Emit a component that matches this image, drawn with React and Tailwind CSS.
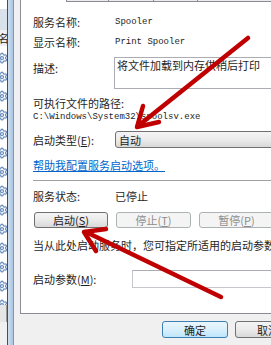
import { Settings } from 'lucide-react';

const gears = Array.from({ length: 14 });

function Btn({ children, disabled, main, className = '' }) {
  let look = 'border-[#707070] bg-gradient-to-b from-[#f4f4f4] via-[#ebebeb] to-[#d9d9d9] text-[#1e1e1e]';
  if (disabled) look = 'border-[#adb2b5] bg-[#f4f4f4] text-[#8d8d8d]';
  if (main) look = 'border-[#3c7fb1] bg-gradient-to-b from-[#eaf6fd] via-[#d9f0fc] to-[#bee6fd] text-[#1e1e1e]';
  return (
    <div className={`shrink-0 border rounded-[3px] flex items-center justify-center text-[11px] leading-[12px] ${look} ${className}`}>
      {children}
    </div>
  );
}

export default function App() {
  return (
    <div className="relative w-[271px] h-[345px] overflow-hidden flex bg-[#f0f0f0] font-['Noto_Sans_CJK_SC','Liberation_Sans',sans-serif] text-[#1e1e1e]">
      {/* service list behind the dialog */}
      <div className="w-[7px] shrink-0 flex flex-col overflow-hidden bg-white">
        <div className="h-[9px] shrink-0 bg-white" />
        <div className="h-[21px] shrink-0 bg-[#d9e1ea]" />
        <div className="h-[16px] shrink-0 bg-[#eceef1] flex items-center text-[11px] leading-[12px] whitespace-nowrap">
          <span className="-ml-[2px]">名称</span>
        </div>
        <div className="h-[259px] shrink-0 flex flex-col gap-[7px] pt-[6px] overflow-hidden">
          {gears.map((_, i) => (
            <Settings key={i} size={12} strokeWidth={2.5} className="shrink-0 -ml-[4px] text-[#6b8fbf]" />
          ))}
        </div>
        <div className="h-[17px] shrink-0 bg-[#e6e6e6] border-r border-[#9a9a9a]" />
        <div className="flex-1 bg-[#f0f0f0]" />
      </div>
      <div className="w-px shrink-0 bg-[#4d4d4d]" />
      <div className="w-[5px] shrink-0 bg-gradient-to-r from-[#cfe0f1] to-[#a9c5e3]" />
      <div className="w-px shrink-0 bg-[#8299b3]" />
      <div className="w-[6px] shrink-0 bg-[#f0f0f0]" />

      {/* dialog */}
      <div className="flex-1 flex flex-col min-w-0">
        <div className="w-[300px] h-[314px] shrink-0 bg-white border-l border-b border-[#898c95] flex flex-col">
          <div className="h-[2px] shrink-0 flex">
            <div className="w-[45px] bg-white" />
            <div className="w-[42px] border-l border-b border-[#898c95] bg-[#ececec]" />
            <div className="w-[45px] border-l border-b border-[#898c95] bg-[#ececec]" />
            <div className="w-[44px] border-l border-b border-[#898c95] bg-[#ececec]" />
            <div className="flex-1 border-l border-b border-[#898c95] bg-[#ececec]" />
          </div>

          <div className="flex flex-col pl-[12px] text-[11px] leading-[12px]">
            <div className="mt-[12px] h-[16px] flex items-center">
              <span className="w-[82px] shrink-0">服务名称:</span>
              <span className="font-['Liberation_Mono',monospace] text-[9px]">Spooler</span>
            </div>
            <div className="mt-[4px] h-[16px] flex items-center">
              <span className="w-[82px] shrink-0">显示名称:</span>
              <span className="font-['Liberation_Mono',monospace] text-[9px] whitespace-pre">Print Spooler</span>
            </div>
            <div className="mt-[7px] flex items-start">
              <span className="w-[81px] shrink-0 mt-[5px]">描述:</span>
              <div className="flex-1 h-[32px] border border-[#abadb3] pl-[2px] pt-px whitespace-nowrap">将文件加载到内存供稍后打印</div>
            </div>
            <div className="mt-[8px] h-[12px]">可执行文件的路径:</div>
            <div className="mt-[2px] h-[12px] font-['Liberation_Mono',monospace] text-[9px] flex items-center">C:\Windows\System32\spoolsv.exe</div>
            <div className="mt-[8px] h-[17px] flex items-center">
              <span className="w-[82px] shrink-0">启动类型(<u>E</u>):</span>
              <div className="flex-1 h-[17px] border border-[#707070] rounded-[3px] bg-gradient-to-b from-[#f4f4f4] via-[#ebebeb] to-[#d8d8d8] flex items-center pl-[3px]">自动</div>
            </div>
            <div className="mt-[11px] h-[12px]">
              <span className="text-[#0066cc] underline">帮助我配置服务启动选项。</span>
            </div>
            <div className="mt-[9px] h-px bg-[#a0a0a0]" />
            <div className="mt-[9px] h-[12px] flex items-center">
              <span className="w-[82px] shrink-0">服务状态:</span>
              <span>已停止</span>
            </div>
            <div className="mt-[10px] flex gap-[8px] ml-px">
              <Btn className="w-[74px] h-[16px]">启动(<u>S</u>)</Btn>
              <Btn disabled className="w-[75px] h-[16px]">停止(<u>T</u>)</Btn>
              <Btn disabled className="w-[75px] h-[16px]">暂停(<u>P</u>)</Btn>
            </div>
            <div className="mt-[11px] h-[12px] whitespace-nowrap">当从此处启动服务时，您可指定所适用的启动参数。</div>
            <div className="mt-[19px] h-[18px] flex items-center">
              <span className="w-[99px] shrink-0">启动参数(<u>M</u>):</span>
              <div className="flex-1 h-[18px] border border-[#c5c7cc] border-t-[#abadb3] bg-white" />
            </div>
          </div>
        </div>

        <div className="mt-[7px] pl-[142px] flex gap-[7px]">
          <Btn main className="w-[66px] h-[17px]">确定</Btn>
          <Btn className="w-[66px] h-[17px]">取消</Btn>
        </div>
      </div>

      {/* red arrows drawn over the screenshot */}
      <svg className="absolute inset-0 pointer-events-none" width="271" height="345">
        <g stroke="#c00000" strokeWidth="4.5" strokeLinecap="round" strokeLinejoin="round" fill="none">
          <path d="M248 38 L138 126" />
          <path d="M143 106 L137 127 L159 122" />
          <path d="M221 297 L86 232" />
          <path d="M106 229 L84 232 L96 251" />
        </g>
      </svg>
    </div>
  );
}
